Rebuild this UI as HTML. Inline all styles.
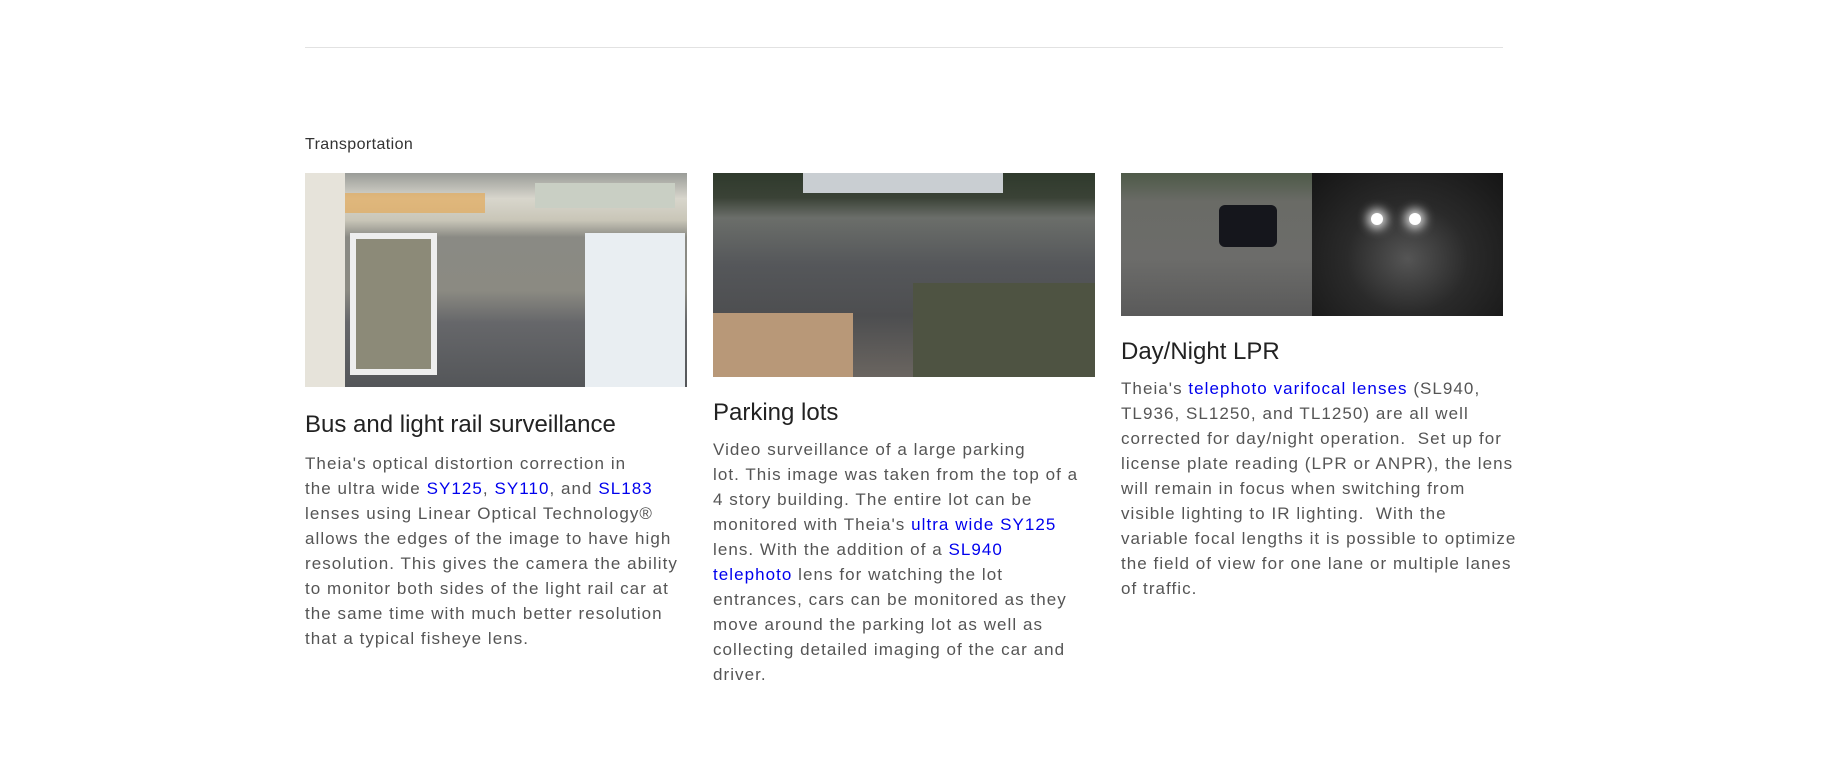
<!DOCTYPE html>
<html><head><meta charset="utf-8"><style>
body{margin:0;width:1829px;height:760px;background:#fff;font-family:"Liberation Sans",sans-serif;position:relative;overflow:hidden}
.hr{position:absolute;left:305px;top:47px;width:1198px;height:1px;background:#e2e2e2}
.cat{position:absolute;left:305px;top:136px;font-size:16px;color:#333;letter-spacing:0.4px}
.col{position:absolute;width:382px}
.img{width:382px;position:relative;overflow:hidden}
h2{font-weight:normal;font-size:24px;color:#222;margin:0;white-space:nowrap}
p{margin:0;font-size:17px;letter-spacing:1.05px;line-height:25px;color:#555;white-space:nowrap}
a{color:#0000ee;text-decoration:none}
</style></head><body>
<div class="hr"></div>
<div class="cat">Transportation</div>

<div class="col" style="left:305px;top:173px">
<div class="img" style="height:214px;background:linear-gradient(180deg,#9a9c98 0%,#d8d6cc 12%,#c9c6b8 22%,#8a8a84 30%,#8b8a82 55%,#66676a 70%,#545659 100%)">
<div style="position:absolute;left:0;top:0;width:40px;height:214px;background:#e6e3da"></div>
<div style="position:absolute;left:45px;top:60px;width:75px;height:130px;background:#8c8a78;border:6px solid #eee"></div>
<div style="position:absolute;left:280px;top:60px;width:100px;height:154px;background:#e9eef2"></div>
<div style="position:absolute;left:40px;top:20px;width:140px;height:20px;background:#e2a95a;opacity:.7"></div>
<div style="position:absolute;left:230px;top:10px;width:140px;height:25px;background:#c9cfc4"></div>
</div>
<h2 style="margin-top:24px">Bus and light rail surveillance</h2>
<p style="margin-top:12px">Theia's optical distortion correction in<br>the ultra wide <a>SY125</a>, <a>SY110</a>, and <a>SL183</a><br>lenses using Linear Optical Technology®<br>allows the edges of the image to have high<br>resolution. This gives the camera the ability<br>to monitor both sides of the light rail car at<br>the same time with much better resolution<br>that a typical fisheye lens.</p>
</div>

<div class="col" style="left:713px;top:173px">
<div class="img" style="height:204px;background:linear-gradient(180deg,#2f3a2c 0%,#3a4236 12%,#6b6e6a 22%,#55575a 45%,#4d4e50 70%,#6a6560 100%)">
<div style="position:absolute;left:0;top:140px;width:140px;height:64px;background:#b89878"></div>
<div style="position:absolute;left:200px;top:110px;width:182px;height:94px;background:#4e5342"></div>
<div style="position:absolute;left:90px;top:0;width:200px;height:20px;background:#c9ced2"></div>
</div>
<h2 style="margin-top:22px">Parking lots</h2>
<p style="margin-top:10px">Video surveillance of a large parking<br>lot. This image was taken from the top of a<br>4 story building. The entire lot can be<br>monitored with Theia's <a>ultra wide SY125</a><br>lens. With the addition of a <a>SL940</a><br><a>telephoto</a> lens for watching the lot<br>entrances, cars can be monitored as they<br>move around the parking lot as well as<br>collecting detailed imaging of the car and<br>driver.</p>
</div>

<div class="col" style="left:1121px;top:173px">
<div class="img" style="height:143px;background:#1a1a1a">
<div style="position:absolute;left:0;top:0;width:191px;height:143px;background:linear-gradient(180deg,#4e5a48 0%,#6a6b66 20%,#6c6c6a 60%,#5a5a5a 100%)"></div>
<div style="position:absolute;left:98px;top:32px;width:58px;height:42px;background:#15161c;border-radius:6px"></div>
<div style="position:absolute;left:191px;top:0;width:191px;height:143px;background:radial-gradient(ellipse at 50% 60%,#555 0%,#2a2a2a 45%,#151515 100%)"></div>
<div style="position:absolute;left:250px;top:40px;width:12px;height:12px;border-radius:50%;background:#fff;box-shadow:0 0 10px 4px #ddd"></div>
<div style="position:absolute;left:288px;top:40px;width:12px;height:12px;border-radius:50%;background:#fff;box-shadow:0 0 10px 4px #ddd"></div>
</div>
<h2 style="margin-top:22px">Day/Night LPR</h2>
<p style="margin-top:10px">Theia's <a>telephoto varifocal lenses</a> (SL940,<br>TL936, SL1250, and TL1250) are all well<br>corrected for day/night operation.&nbsp; Set up for<br>license plate reading (LPR or ANPR), the lens<br>will remain in focus when switching from<br>visible lighting to IR lighting.&nbsp; With the<br>variable focal lengths it is possible to optimize<br>the field of view for one lane or multiple lanes<br>of traffic.</p>
</div>
</body></html>
